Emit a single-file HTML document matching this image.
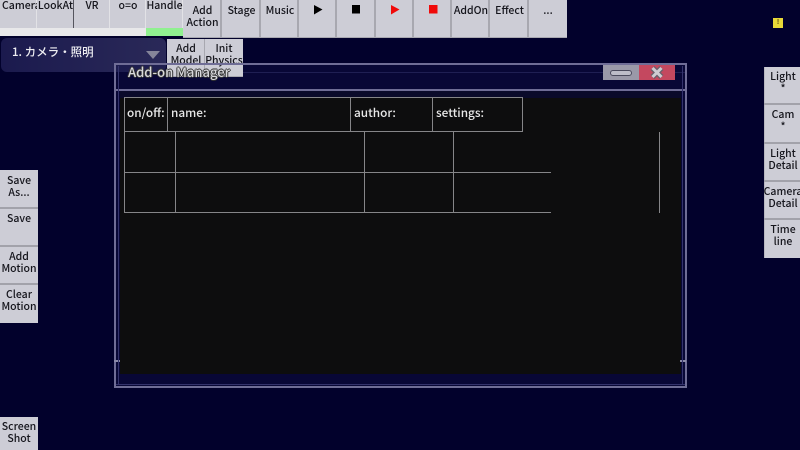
<!DOCTYPE html>
<html><head><meta charset="utf-8">
<style>
html,body{margin:0;padding:0;width:800px;height:450px;overflow:hidden;background:#02012c;}
body{position:relative;font-family:"Liberation Sans","Noto Sans CJK JP",sans-serif;filter:blur(.3px);}
.b,.t,.l{position:absolute;}
.b{background:#cdcdd6;box-shadow:inset -2px 0 0 #a8a8b0,inset 0 -1px 0 #a8a8b0;color:#15151c;font:500 10.500px/12px "Noto Sans CJK JP",sans-serif;text-align:center;overflow:hidden;padding-top:5px;box-sizing:border-box;}
.b span{display:block;white-space:nowrap;position:relative;left:50%;transform:translateX(-50%);width:max-content;}
.top5{box-shadow:inset -1px 0 0 #e2e2e6;padding-top:0;}
.side{box-shadow:inset 0 -2px 0 #a2a2aa;}
.right{box-shadow:inset 0 -2px 0 #a2a2aa,inset 1px 0 0 #b8b8c0;padding-top:4px;}
.right span{left:19px;}
.strip{position:absolute;left:0;right:0;top:28px;height:8px;background:#e8e8ea;}
.l{background:#858588;}
.t{color:#e8e8e8;font:500 11.800px/16px "Noto Sans CJK JP",sans-serif;white-space:nowrap;}
</style></head><body>

<div class="b top5" style="left:0;top:0;width:37px;height:36px;"><span style="left:0;transform:none;margin-left:2px">Camera</span><div class="strip"></div></div>
<div class="b top5" style="left:37px;top:0;width:37px;height:36px;box-shadow:inset -1px 0 0 #55555e;"><span>LookAt</span><div class="strip"></div></div>
<div class="b top5" style="left:74px;top:0;width:36px;height:36px;"><span>VR</span><div class="strip"></div></div>
<div class="b top5" style="left:110px;top:0;width:36px;height:36px;"><span>o=o</span><div class="strip"></div></div>
<div class="b top5" style="left:146px;top:0;width:37px;height:36px;"><span>Handle</span><div class="strip" style="background:#90f090"></div></div>

<div class="b" style="left:183px;top:0;width:39px;height:38px;"><span>Add</span><span>Action</span></div>
<div class="b" style="left:222px;top:0;width:39px;height:38px;"><span>Stage</span></div>
<div class="b" style="left:261px;top:0;width:38px;height:38px;"><span>Music</span></div>
<div class="b" style="left:299px;top:0;width:38px;height:38px;"><svg style="position:absolute;left:0;top:0" width="38" height="38"><path d="M15 5L15 14.500L23.500 9.500Z" fill="#000"/></svg></div>
<div class="b" style="left:337px;top:0;width:39px;height:38px;"><svg style="position:absolute;left:0;top:0" width="38" height="38"><rect x="15" y="5" width="8" height="8.500" fill="#000"/></svg></div>
<div class="b" style="left:376px;top:0;width:38px;height:38px;"><svg style="position:absolute;left:0;top:0" width="38" height="38"><path d="M15 5L15 14.500L23.500 9.500Z" fill="#f00a0a"/></svg></div>
<div class="b" style="left:414px;top:0;width:38px;height:38px;"><svg style="position:absolute;left:0;top:0" width="38" height="38"><rect x="15" y="5" width="8.500" height="8.500" fill="#f00a0a"/></svg></div>
<div class="b" style="left:452px;top:0;width:38px;height:38px;"><span>AddOn</span></div>
<div class="b" style="left:490px;top:0;width:39px;height:38px;"><span>Effect</span></div>
<div class="b" style="left:529px;top:0;width:38px;height:38px;box-shadow:inset 0 -1px 0 #a8a8b0;"><span>...</span></div>

<!-- dropdown -->
<div style="position:absolute;left:1px;top:38px;width:165px;height:34px;border-radius:6px;background:linear-gradient(90deg,#1b1a4e,#2a2958);"></div>
<div class="t" style="left:12px;top:44px;font-size:11.500px;color:#eeeef2;">1. カメラ・照明</div>
<svg style="position:absolute;left:145px;top:50px" width="16" height="10"><path d="M1 1H15L8 9Z" fill="#85859a"/></svg>

<!-- window bg -->
<div style="position:absolute;left:114px;top:63px;width:573px;height:325px;background:rgba(18,17,70,.4);"></div>

<div class="b" style="left:167px;top:39px;width:38px;height:38px;padding-top:4px;box-shadow:inset -1px 0 0 #a8a8b0,inset 0 -1px 0 #a8a8b0;"><span>Add</span><span>Model</span></div>
<div class="b" style="left:205px;top:39px;width:38px;height:38px;padding-top:4px;box-shadow:inset 0 -1px 0 #a8a8b0;"><span>Init</span><span>Physics</span></div>

<!-- window frame -->
<div style="position:absolute;left:114px;top:63px;width:573px;height:325px;box-sizing:border-box;border:2px solid #6f6d96;"></div>
<div style="position:absolute;left:120px;top:98px;width:561px;height:276px;background:#0d0d0e;"></div>
<div style="position:absolute;left:114px;top:89px;width:573px;height:2px;background:#6f6d96;"></div>
<div style="position:absolute;left:243px;top:72px;width:442px;height:1px;background:#2a2960;opacity:.7;"></div>
<div style="position:absolute;left:120px;top:91px;width:561px;height:7px;background:#0a0a2a;"></div>
<div style="position:absolute;left:116px;top:384px;width:569px;height:1px;background:#34336c;"></div>
<div style="position:absolute;left:114px;top:360px;width:6px;height:2px;background:#8a89a8;"></div>
<div style="position:absolute;left:680px;top:360px;width:6px;height:2px;background:#8a89a8;"></div>
<div style="position:absolute;left:118px;top:66px;width:1px;height:319px;background:#34336c;"></div>
<div style="position:absolute;left:682px;top:66px;width:1px;height:319px;background:#34336c;"></div>

<div style="position:absolute;left:128px;top:63px;font:500 13px/18px 'Noto Sans CJK JP',sans-serif;color:#d8d8dc;text-shadow:-1px 0 0 #333,1px 0 0 #333,0 -1px 0 #333,0 1px 0 #333;">Add-on Manager</div>

<div style="position:absolute;left:603px;top:65px;width:36px;height:15px;background:#9a99a8;"></div>
<div style="position:absolute;left:639px;top:65px;width:36px;height:15px;background:#c4485f;"></div>
<div style="position:absolute;left:610px;top:70px;width:20px;height:4px;border:1.500px solid #4a4a5c;border-radius:3px;background:#bdbdc8;"></div>
<svg style="position:absolute;left:650px;top:66px" width="14" height="13"><path d="M2.500 2L11.500 11M11.500 2L2.500 11" stroke="#6a606c" stroke-width="5.500"/><path d="M2.500 2L11.500 11M11.500 2L2.500 11" stroke="#cfcbd2" stroke-width="3"/></svg>

<!-- table header -->
<div class="l" style="left:124px;top:97px;width:399px;height:1px;"></div>
<div class="l" style="left:124px;top:131px;width:399px;height:1px;"></div>
<div class="l" style="left:124px;top:97px;width:1px;height:116px;"></div>
<div class="l" style="left:167px;top:97px;width:1px;height:35px;"></div>
<div class="l" style="left:350px;top:97px;width:1px;height:35px;"></div>
<div class="l" style="left:432px;top:97px;width:1px;height:35px;"></div>
<div class="l" style="left:522px;top:97px;width:1px;height:35px;"></div>
<div class="t" style="left:127px;top:105px;">on/off:</div>
<div class="t" style="left:171px;top:105px;">name:</div>
<div class="t" style="left:354px;top:105px;">author:</div>
<div class="t" style="left:436px;top:105px;">settings:</div>
<!-- rows -->
<div class="l" style="left:124px;top:172px;width:427px;height:1px;"></div>
<div class="l" style="left:124px;top:212px;width:427px;height:1px;"></div>
<div class="l" style="left:175px;top:132px;width:1px;height:81px;"></div>
<div class="l" style="left:364px;top:132px;width:1px;height:81px;"></div>
<div class="l" style="left:453px;top:132px;width:1px;height:81px;"></div>
<div class="l" style="left:659px;top:132px;width:1px;height:81px;"></div>

<!-- left -->
<div class="b side" style="left:0;top:170px;width:38px;height:39px;"><span>Save</span><span>As...</span></div>
<div class="b side" style="left:0;top:209px;width:38px;height:38px;padding-top:4px;"><span>Save</span></div>
<div class="b side" style="left:0;top:247px;width:38px;height:38px;padding-top:4px;"><span>Add</span><span>Motion</span></div>
<div class="b" style="left:0;top:285px;width:38px;height:38px;box-shadow:none;padding-top:4px;"><span>Clear</span><span>Motion</span></div>
<div class="b" style="left:0;top:417px;width:38px;height:33px;box-shadow:none;padding-top:4px;"><span>Screen</span><span>Shot</span></div>

<!-- right -->
<div class="b right" style="left:764px;top:67px;width:36px;height:38px;"><span>Light</span><span>*</span></div>
<div class="b right" style="left:764px;top:105px;width:36px;height:39px;"><span>Cam</span><span>*</span></div>
<div class="b right" style="left:764px;top:144px;width:36px;height:38px;"><span>Light</span><span>Detail</span></div>
<div class="b right" style="left:764px;top:182px;width:36px;height:38px;"><span>Camera</span><span>Detail</span></div>
<div class="b right" style="left:764px;top:220px;width:36px;height:38px;box-shadow:inset 1px 0 0 #b8b8c0;"><span>Time</span><span>line</span></div>

<div style="position:absolute;left:773px;top:18px;width:10px;height:10px;background:#e8d838;color:#5a4a10;font:700 7px/10px 'Liberation Sans',sans-serif;text-align:center;">!</div>

</body></html>
